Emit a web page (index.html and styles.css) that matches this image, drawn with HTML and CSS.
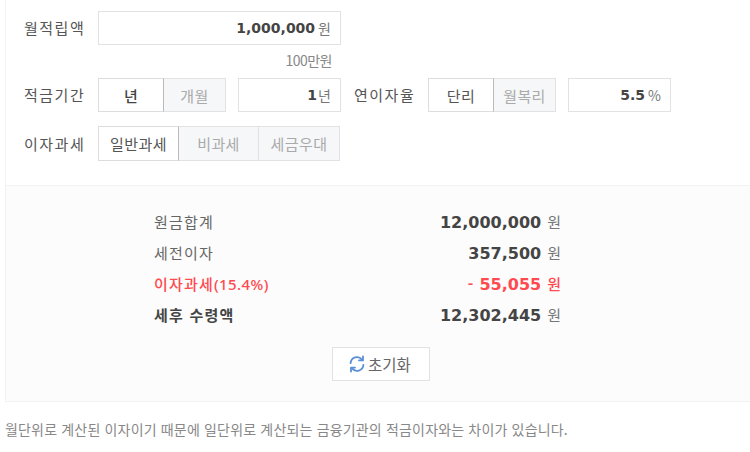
FILE: index.html
```html
<!DOCTYPE html>
<html lang="ko">
<head>
  <meta charset="UTF-8">
  <title>적금 계산기</title>
  <link rel="stylesheet" href="styles.css">
</head>
<body>
  <div class="calc">
    <!-- Inputs -->
    <div class="calc-form">
      <div class="form-row">
        <span class="form-label">월적립액</span>
        <div class="amount-box amount-wide"><b>1,000,000</b><span class="unit">원</span></div>
      </div>
      <div class="form-hint">100만원</div>
      <div class="form-row">
        <span class="form-label">적금기간</span>
        <div class="toggle">
          <span class="toggle-btn on w-66"><b>년</b></span>
          <span class="toggle-btn w-62">개월</span>
        </div>
        <div class="amount-box amount-small"><b>1</b><span class="unit tight">년</span></div>
        <span class="form-label label-rate">연이자율</span>
        <div class="toggle">
          <span class="toggle-btn on w-66">단리</span>
          <span class="toggle-btn w-62">월복리</span>
        </div>
        <div class="amount-box amount-small"><b>5.5</b><span class="unit">%</span></div>
      </div>
      <div class="form-row row-tax">
        <span class="form-label">이자과세</span>
        <div class="toggle toggle-tax">
          <span class="toggle-btn on w-81">일반과세</span>
          <span class="toggle-btn w-80">비과세</span>
          <span class="toggle-btn w-81">세금우대</span>
        </div>
      </div>
    </div>

    <!-- Results -->
    <div class="calc-result">
      <div class="result-list">
        <div class="result-row">
          <span>원금합계</span>
          <span><b>12,000,000</b><i class="won">원</i></span>
        </div>
        <div class="result-row">
          <span>세전이자</span>
          <span><b>357,500</b><i class="won">원</i></span>
        </div>
        <div class="result-row result-tax">
          <span>이자과세<small>(15.4%)</small></span>
          <span><em class="minus">-</em><b>55,055</b><i class="won">원</i></span>
        </div>
        <div class="result-row result-total">
          <span>세후 수령액</span>
          <span><b>12,302,445</b><i class="won">원</i></span>
        </div>
      </div>
      <button class="reset-btn" type="button">
        <svg width="18" height="18" viewBox="0 0 18 18" fill="none" stroke="#5b8fd6" stroke-width="1.8" stroke-linecap="round">
          <path d="M2.6 8.2A6.4 6.4 0 0 1 14 4.6"/>
          <path d="M15.4 9.8A6.4 6.4 0 0 1 4 13.4"/>
          <path d="M15 1.4V5.4H11" stroke-linejoin="round"/>
          <path d="M3 16.6V12.6H7" stroke-linejoin="round"/>
        </svg>
        초기화
      </button>
    </div>

    <p class="calc-note">월단위로 계산된 이자이기 때문에 일단위로 계산되는 금융기관의 적금이자와는 차이가 있습니다.</p>
  </div>
</body>
</html>
```

FILE: styles.css
```css
/* Global styles */
body {
  margin: 0;
  background-color: #fff;
  font-family: "Noto Sans CJK KR", "Noto Sans", sans-serif;
  font-size: 15px;
  color: #555;
  overflow: hidden;
}

b {
  font-family: "DejaVu Sans", sans-serif;
  font-weight: bold;
  color: #444;
}

/* Input section */
.calc-form {
  height: 185px;
  box-sizing: border-box;
  margin-left: 5px;
  padding: 11px 0 0 18px;
  border-left: 1px solid #f3f3f3;
}

.form-row {
  display: flex;
  align-items: center;
  height: 34px;
}

.row-tax {
  height: 35px;
  margin-top: 14px;
}

.form-label {
  width: 74px;
  color: #555;
  line-height: 20px;
  letter-spacing: 1.5px;
}

.label-rate {
  margin-left: 13px;
}

.form-hint {
  width: 308px;
  height: 33px;
  font-size: 14px;
  line-height: 30px;
  text-align: right;
  color: #888;
  letter-spacing: -0.5px;
}

/* Number boxes */
.amount-box {
  display: flex;
  align-items: center;
  justify-content: flex-end;
  box-sizing: border-box;
  height: 34px;
  padding-right: 9px;
  border: 1px solid #e2e2e2;
  background-color: #fff;
}

.amount-box b {
  font-size: 14px;
}

.amount-wide {
  width: 243px;
}

.amount-small {
  width: 103px;
  margin-left: 12px;
}

.unit {
  margin-left: 3px;
  font-size: 14px;
  color: #777;
}

.unit.tight {
  margin-left: 1px;
}

/* Toggle buttons */
.toggle {
  display: flex;
  height: 34px;
}

.toggle-tax {
  height: 35px;
}

.toggle-btn {
  display: flex;
  align-items: center;
  justify-content: center;
  box-sizing: border-box;
  border: 1px solid #e2e2e2;
  background-color: #f6f7f9;
  color: #aaa;
  letter-spacing: 0.4px;
}

.toggle-btn b {
  font-family: "Noto Sans CJK KR", sans-serif;
  font-weight: 500;
}

.toggle-btn + .toggle-btn {
  border-left: none;
}

.toggle-btn.on {
  background-color: #fff;
  color: #555;
  border-color: #ddd #bbb #ddd #ddd;
}

.w-66 { width: 66px; }
.w-62 { width: 62px; }
.w-81 { width: 81px; }
.w-80 { width: 80px; }

/* Result section */
.calc-result {
  height: 217px;
  box-sizing: border-box;
  margin-left: 5px;
  padding-top: 20px;
  border-top: 1px solid #f2f2f2;
  border-bottom: 1px solid #f2f2f2;
  border-left: 1px solid #f2f2f2;
  background-color: #fcfcfc;
}

.result-list {
  width: 407px;
  margin-left: 148px;
}

.result-row {
  display: flex;
  align-items: center;
  justify-content: space-between;
  height: 31px;
  color: #666;
  letter-spacing: 1.2px;
}

.result-row b {
  font-size: 16px;
  letter-spacing: 0;
}

.won {
  margin-left: 6px;
  font-style: normal;
  font-size: 15px;
  letter-spacing: 0;
  color: #777;
}

.result-tax,
.result-tax b,
.result-tax .won {
  color: #ff4a4f;
}

.result-tax span:first-child,
.result-tax .won {
  font-weight: 500;
}

.result-tax small {
  font-family: "Noto Sans", sans-serif;
  font-size: 15px;
  letter-spacing: 0.4px;
}

.minus {
  margin-right: 6px;
  font-style: normal;
  font-weight: bold;
  letter-spacing: 0;
}

.result-total span:first-child {
  font-weight: bold;
  color: #444;
}

/* Reset button */
.reset-btn {
  display: flex;
  align-items: center;
  gap: 2px;
  box-sizing: border-box;
  width: 98px;
  height: 34px;
  margin: 17px 0 0 326px;
  padding: 0 0 0 15px;
  border: 1px solid #e2e2e2;
  background-color: #fff;
  font: inherit;
  font-size: 15.5px;
  color: #666;
}

/* Footnote */
.calc-note {
  margin: 17px 0 0 5px;
  font-size: 14px;
  line-height: 20px;
  color: #888;
  letter-spacing: 0.17px;
  white-space: nowrap;
}
```
